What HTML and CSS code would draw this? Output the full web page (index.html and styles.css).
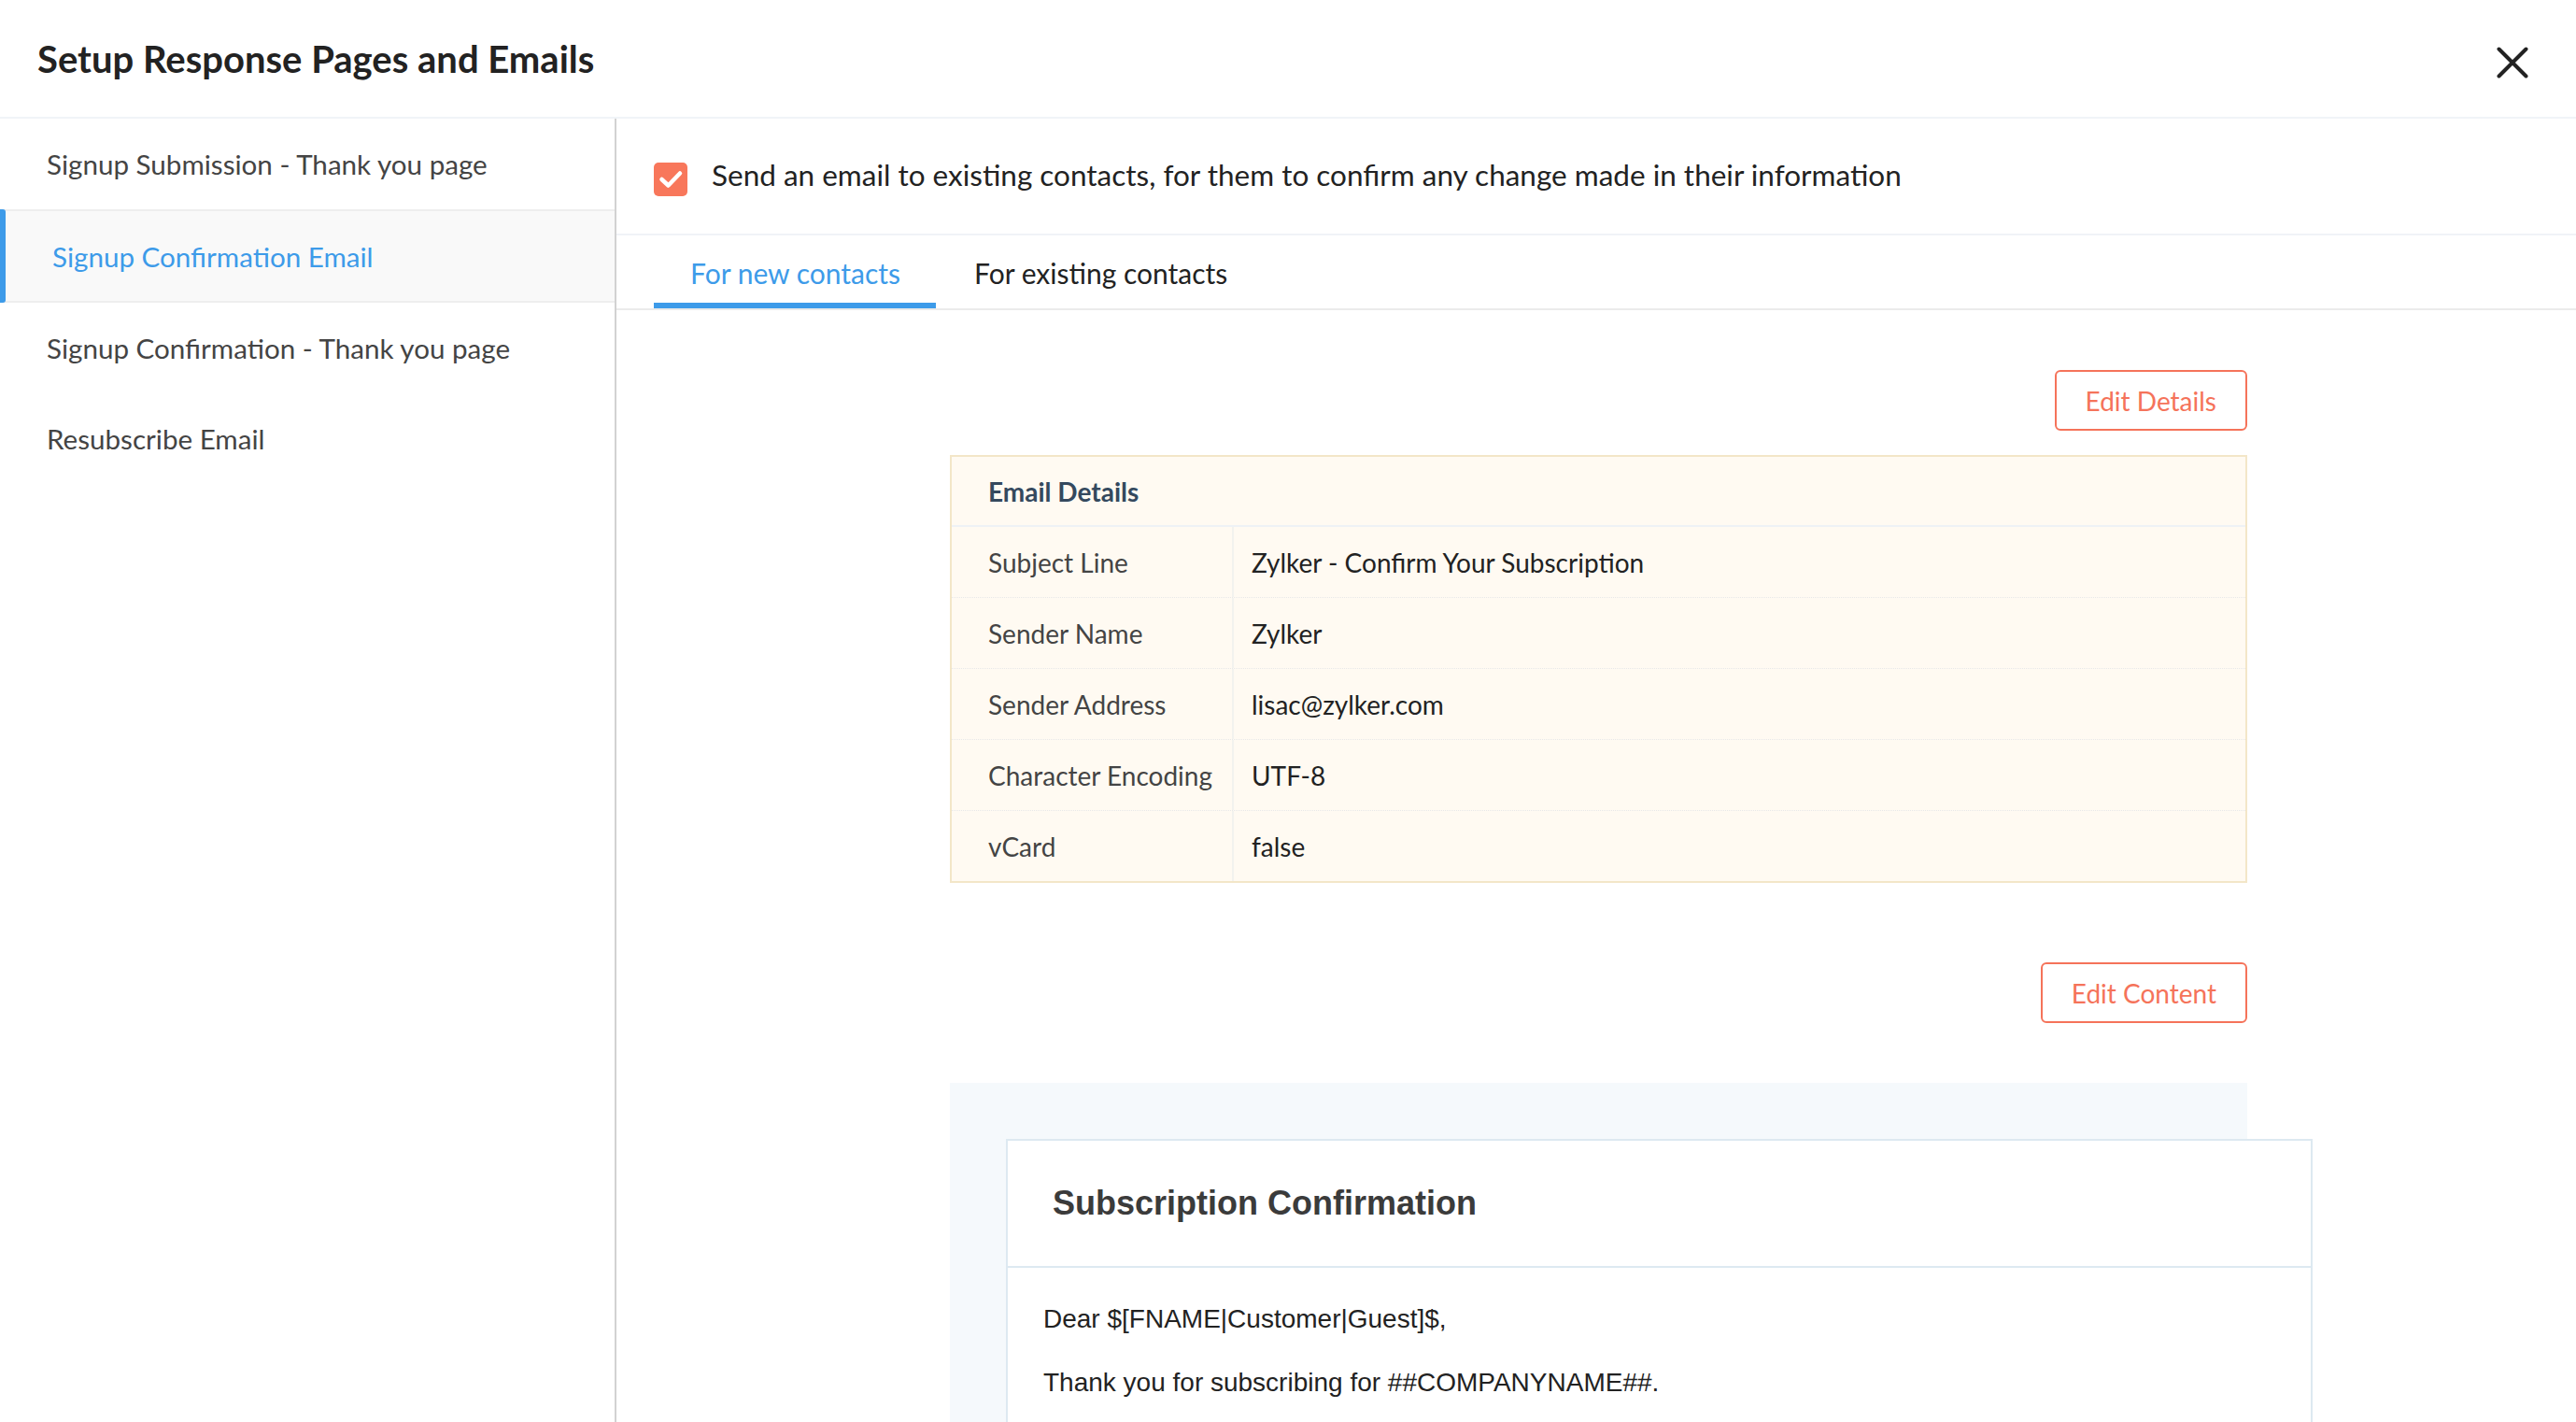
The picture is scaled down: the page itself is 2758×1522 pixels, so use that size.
FILE: index.html
```html
<!DOCTYPE html>
<html lang="en">
<head>
<meta charset="utf-8">
<title>Setup Response Pages and Emails</title>
<link rel="stylesheet" href="styles.css">
</head>
<body>
<div class="app">
  <header class="topbar">
    <h1 class="title">Setup Response Pages and Emails</h1>
    <button class="close" aria-label="Close">
      <svg width="34" height="34" viewBox="0 0 34 34"><path d="M2.5 2.5 L31.5 31.5 M31.5 2.5 L2.5 31.5" stroke="#222" stroke-width="4" stroke-linecap="round" fill="none"/></svg>
    </button>
  </header>
  <div class="layout">
    <nav class="sidebar">
      <div class="nav-item">Signup Submission - Thank you page</div>
      <div class="nav-item active">Signup Confirmation Email</div>
      <div class="nav-item">Signup Confirmation - Thank you page</div>
      <div class="nav-item">Resubscribe Email</div>
    </nav>
    <main class="main">
      <div class="optin">
        <span class="checkbox">
          <svg width="36" height="36" viewBox="0 0 36 36"><path d="M8.5 18 L15.5 24.5 L28 11.5" stroke="#fff" stroke-width="4.5" stroke-linecap="round" stroke-linejoin="round" fill="none"/></svg>
        </span>
        <span class="optin-label">Send an email to existing contacts, for them to confirm any change made in their information</span>
      </div>
      <div class="tabs">
        <div class="tab active">For new contacts</div>
        <div class="tab">For existing contacts</div>
      </div>
      <div class="content">
        <div class="actions first"><button class="btn">Edit Details</button></div>
        <div class="details">
          <div class="details-head">Email Details</div>
          <div class="row"><div class="label">Subject Line</div><div class="value">Zylker - Confirm Your Subscription</div></div>
          <div class="row"><div class="label">Sender Name</div><div class="value">Zylker</div></div>
          <div class="row"><div class="label">Sender Address</div><div class="value">lisac@zylker.com</div></div>
          <div class="row"><div class="label">Character Encoding</div><div class="value">UTF-8</div></div>
          <div class="row last"><div class="label">vCard</div><div class="value">false</div></div>
        </div>
        <div class="actions second"><button class="btn">Edit Content</button></div>
        <div class="preview">
          <div class="mail-card">
            <div class="mail-head">Subscription Confirmation</div>
            <div class="mail-body">
              <p>Dear $[FNAME|Customer|Guest]$,</p>
              <p>Thank you for subscribing for ##COMPANYNAME##.</p>
            </div>
          </div>
        </div>
      </div>
    </main>
  </div>
</div>
</body>
</html>
```

FILE: styles.css
```css
* { box-sizing: border-box; }
html, body { margin: 0; padding: 0; }
body {
  font-family: Lato, "Open Sans", sans-serif;
  color: #222;
  background: #fff;
  width: 2758px;
  height: 1522px;
  overflow: hidden;
}
.app { display: flex; flex-direction: column; height: 1522px; }

.topbar {
  height: 127px;
  flex: none;
  display: flex;
  align-items: center;
  justify-content: space-between;
  padding: 0 51px 0 40px;
  border-bottom: 2px solid #f0f4f8;
}
.title {
  margin: 0;
  font-size: 40px;
  font-weight: 700;
  color: #222;
}
.close {
  border: 0;
  background: none;
  padding: 0;
  margin-top: 9px;
  width: 34px;
  height: 34px;
  display: block;
}
.close svg { display: block; }

.layout { flex: 1; display: flex; min-height: 0; }

.sidebar {
  width: 660px;
  flex: none;
  border-right: 2px solid #d2d2d2;
}
.nav-item {
  position: relative;
  height: 97px;
  display: flex;
  align-items: center;
  padding-left: 50px;
  font-size: 29.6px;
  color: #444;
}
.nav-item.active {
  height: 100px;
  padding-left: 56px;
  color: #3d9be9;
  background: #f9f9f9;
  border-top: 2px solid #eeeeee;
  border-bottom: 2px solid #eeeeee;
}
.nav-item.active::before {
  content: "";
  position: absolute;
  left: 0;
  top: -2px;
  bottom: -2px;
  width: 6px;
  background: #3d9be9;
  border-radius: 0 3px 3px 0;
}

.main { flex: 1; min-width: 0; }

.optin {
  height: 125px;
  display: flex;
  align-items: center;
  padding-left: 40px;
  border-bottom: 2px solid #f0f3f7;
}
.checkbox {
  width: 36px;
  height: 36px;
  border-radius: 5px;
  background: #f8775b;
  display: block;
  margin-top: 6px;
  flex: none;
}
.checkbox svg { display: block; }
.optin-label {
  margin-left: 26px;
  font-size: 31.5px;
  color: #222;
  padding-bottom: 3px;
}

.tabs {
  display: flex;
  padding-left: 40px;
  border-bottom: 2px solid #ebebeb;
}
.tab {
  height: 78px;
  padding: 8px 38px 0 39px;
  display: flex;
  align-items: center;
  font-size: 30px;
  color: #222;
  border-bottom: 6px solid transparent;
}
.tab.active {
  color: #3d9be9;
  border-bottom-color: #3d9be9;
}
.tab + .tab { padding-left: 41px; }

.content {
  width: 1389px;
  margin-left: 357px;
}
.actions { display: flex; justify-content: flex-end; }
.actions.first { margin-top: 64px; margin-bottom: 26px; }
.actions.second { margin-top: 85px; margin-bottom: 64px; }
.btn {
  height: 65px;
  padding: 0 31px;
  border: 2px solid #f5735a;
  border-radius: 6px;
  background: #fff;
  color: #f5735a;
  font-family: Lato, "Open Sans", sans-serif;
  font-size: 28px;
  line-height: 1;
}

.details {
  border: 2px solid #f3e6c8;
  background: #fffaf2;
}
.details-head {
  height: 75px;
  display: flex;
  align-items: center;
  padding-left: 39px;
  font-size: 28px;
  font-weight: 700;
  color: #34495e;
  border-bottom: 2px solid #eef2f5;
}
.row {
  display: grid;
  grid-template-columns: 302px 1fr;
  height: 76px;
  border-bottom: 1px dotted #e8e8e8;
}
.row.last { border-bottom: 0; height: 75px; }
.label, .value {
  display: flex;
  align-items: center;
  font-size: 28px;
}
.label {
  padding-left: 39px;
  color: #444;
  border-right: 2px solid #f2f2ee;
}
.value {
  padding-left: 19px;
  color: #222;
}

.preview {
  background: #f5f9fc;
  padding: 60px 0 0 60px;
  height: 400px;
}
.mail-card {
  width: 1399px;
  background: #fff;
  border: 2px solid #dde9f1;
  border-bottom: 0;
  height: 340px;
}
.mail-head {
  height: 136px;
  display: flex;
  align-items: center;
  padding-left: 48px;
  font-family: "Liberation Sans", Arial, sans-serif;
  font-weight: 700;
  font-size: 36px;
  color: #3b3b3b;
  border-bottom: 2px solid #dde9f1;
}
.mail-body {
  padding: 34px 0 0 38px;
  font-family: "Liberation Sans", Arial, sans-serif;
  font-size: 28px;
  color: #222;
}
.mail-body p {
  margin: 0 0 26px;
  line-height: 42px;
}
```
